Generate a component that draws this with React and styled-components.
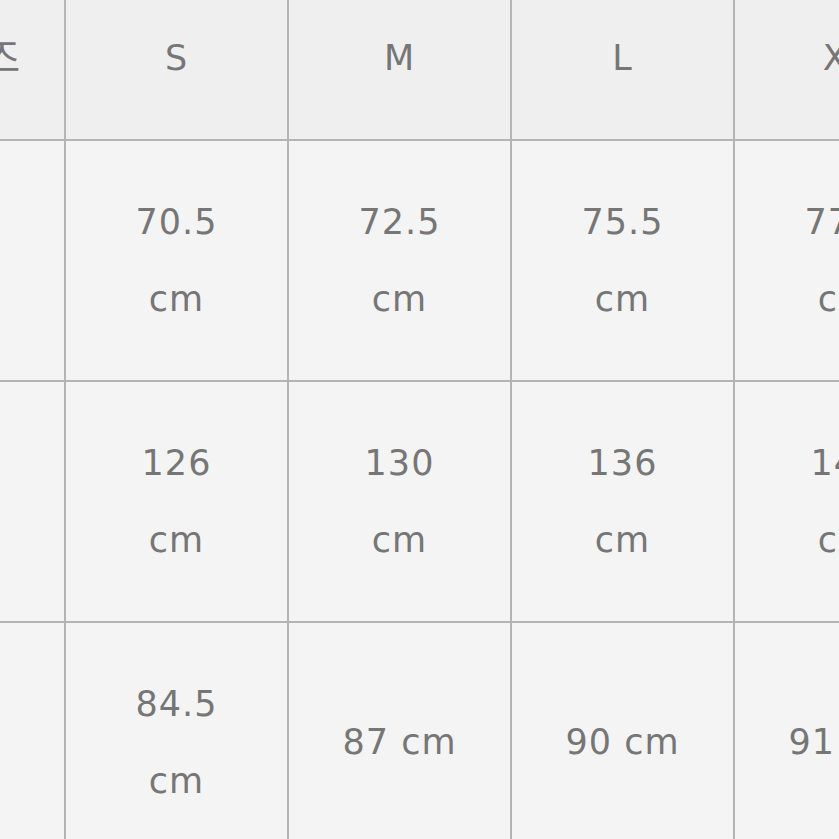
import React from 'react';
import styled, { createGlobalStyle } from 'styled-components';

const GlobalStyle = createGlobalStyle`
  html, body {
    margin: 0;
    padding: 0;
    background: #f4f4f4;
    overflow: hidden;
  }
`;

const Page = styled.div`
  width: 839px;
  height: 839px;
  overflow: hidden;
  background: #f4f4f4;
`;

const Table = styled.div`
  display: grid;
  grid-template-columns: repeat(5, 223px);
  grid-template-rows: 164px repeat(3, 241px);
  margin-left: -157px;
  margin-top: -23px;
  width: max-content;
`;

const Cell = styled.div`
  display: flex;
  flex-direction: column;
  align-items: center;
  justify-content: center;
  padding-left: ${(p) => (p.$shift ? '22px' : '0')};
  background: ${(p) => (p.$head ? '#efefef' : '#f4f4f4')};
  border-right: 2px solid #b4b4b4;
  border-bottom: 2px solid #b4b4b4;
  box-sizing: border-box;
  color: #767676;
  font-family: "DejaVu Sans", "Noto Sans CJK KR", sans-serif;
  font-size: ${(p) => (p.$shift ? '40px' : '35px')};
  letter-spacing: 1px;
  line-height: 77px;
  white-space: nowrap;
`;

const Line = styled.span`
  display: block;
`;

const header = ['사이즈', 'S', 'M', 'L', 'XL'];
const rows = [
  ['총장', ['70.5', 'cm'], ['72.5', 'cm'], ['75.5', 'cm'], ['77.5', 'cm']],
  ['가슴', ['126', 'cm'], ['130', 'cm'], ['136', 'cm'], ['142', 'cm']],
  ['소매', ['84.5', 'cm'], ['87 cm'], ['90 cm'], ['91 cm']],
];

export default function App() {
  return (
    <Page>
      <GlobalStyle />
      <Table>
        {header.map((h, i) => (
          <Cell key={h} $head $shift={i === 0}>
            <Line>{h}</Line>
          </Cell>
        ))}
        {rows.map((r) =>
          r.map((c, i) => (
            <Cell key={r[0] + i}>
              {i === 0 ? <Line>{c}</Line> : c.map((t) => <Line key={t}>{t}</Line>)}
            </Cell>
          ))
        )}
      </Table>
    </Page>
  );
}
